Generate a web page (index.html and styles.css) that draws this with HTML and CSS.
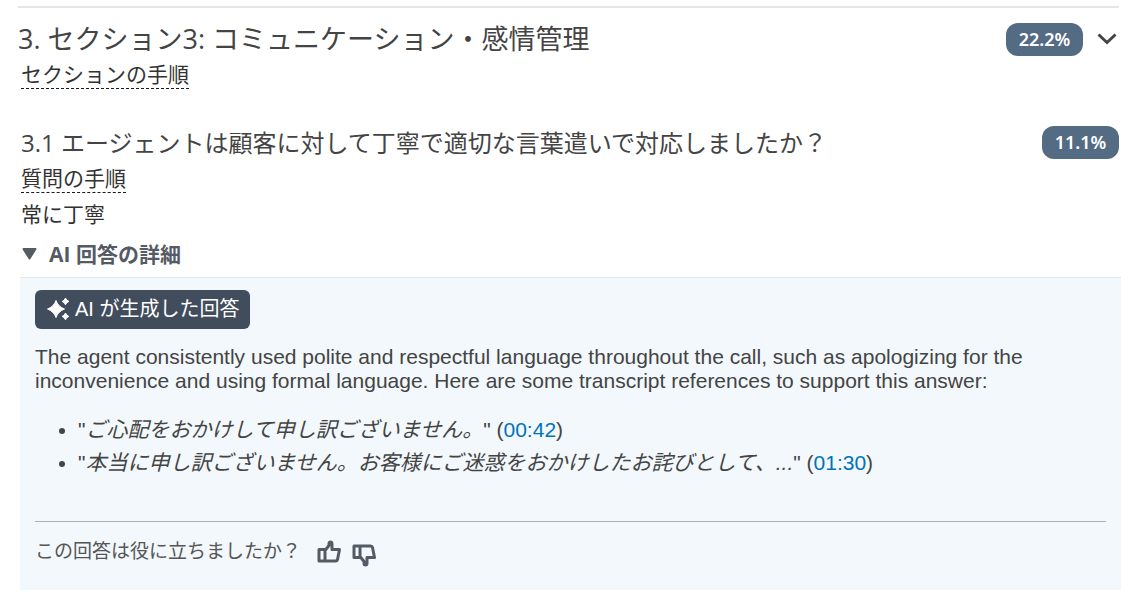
FILE: index.html
```html
<!DOCTYPE html>
<html lang="ja">
<head>
<meta charset="utf-8">
<meta name="viewport" content="width=device-width, initial-scale=1">
<title>セクション3: コミュニケーション・感情管理</title>
<link rel="stylesheet" href="styles.css">
</head>
<body>
<main class="evaluation">
  <section class="section">
    <header class="section-header">
      <h2 class="section-title">3. セクション3: コミュニケーション・感情管理</h2>
      <div class="section-score">
        <span class="badge">22.2%</span>
        <button class="icon-button" type="button" aria-label="セクションを折りたたむ">
          <svg class="chevron" viewBox="0 0 20 12" aria-hidden="true"><path d="M1.500 1.500 10 9.500l8.500-8"/></svg>
        </button>
      </div>
    </header>
    <button class="instructions" type="button">セクションの手順</button>
  </section>

  <section class="question">
    <header class="question-header">
      <h3 class="question-title">3.1 エージェントは顧客に対して丁寧で適切な言葉遣いで対応しましたか？</h3>
      <span class="badge">11.1%</span>
    </header>
    <button class="instructions" type="button">質問の手順</button>
    <p class="answer">常に丁寧</p>
    <button class="details-toggle" type="button" aria-expanded="true">
      <svg class="caret" viewBox="0 0 16 14" aria-hidden="true"><path d="M2.500 2h12L8.500 11.500z"/></svg>
      <span>AI 回答の詳細</span>
    </button>
  </section>

  <section class="ai-panel">
    <button class="ai-button" type="button">
      <svg class="sparkle" viewBox="0 0 24 24" aria-hidden="true">
        <path d="M9 3.500Q11 9.500 17.500 12 11 14.500 9 20.500 7 14.500.5 12 7 9.500 9 3.500z"/>
        <path d="M18.500 1q.9 2.500 3.400 3.400-2.500.9-3.400 3.400-.9-2.500-3.400-3.400 2.500-.9 3.400-3.400z"/>
        <path d="M18.500 16q.9 2.500 3.400 3.400-2.500.9-3.400 3.400-.9-2.500-3.400-3.400 2.500-.9 3.400-3.400z"/>
      </svg>
      <span>AI が生成した回答</span>
    </button>
    <p class="summary" lang="en">The agent consistently used polite and respectful language throughout the call, such as apologizing for the inconvenience and using formal language. Here are some transcript references to support this answer:</p>
    <ul class="references">
      <li>"<em>ご心配をおかけして申し訳ございません。</em>" (<a href="#t0042">00:42</a>)</li>
      <li>"<em>本当に申し訳ございません。お客様にご迷惑をおかけしたお詫びとして、...</em>" (<a href="#t0130">01:30</a>)</li>
    </ul>
    <footer class="feedback">
      <span>この回答は役に立ちましたか？</span>
      <div class="votes">
        <button class="icon-button" type="button" aria-label="役に立った">
          <svg class="thumb" viewBox="0 0 24 24" aria-hidden="true"><path d="M2 9.500h6V21H2zM8 10.500l4-5V4q0-2 1.500-2T15 4v5.500h7.500L20.500 19.500q-.4 1.500-2 1.500H8"/></svg>
        </button>
        <button class="icon-button vote-down" type="button" aria-label="役に立たなかった">
          <svg class="thumb" viewBox="0 0 24 24" aria-hidden="true"><path d="M2 3h6v11.500H2zM8 3h10.500q1.600 0 2 1.500L22.500 14.500H15V20q0 2-1.500 2T12 20v-1.500l-4-5"/></svg>
        </button>
      </div>
    </footer>
  </section>
</main>
</body>
</html>
```
FILE: styles.css
```css
* {
  box-sizing: border-box;
}

body {
  margin: 0;
  background: #fff;
  color: #444;
  font-family: "Liberation Sans", "Noto Sans CJK JP", sans-serif;
  font-size: 21px;
  line-height: 24px;
}

h2,
h3,
p,
ul {
  margin: 0;
  padding: 0;
  font-weight: 400;
}

button {
  padding: 0;
  border: 0;
  background: none;
  color: inherit;
  font: inherit;
  cursor: pointer;
}

svg {
  display: block;
}

.evaluation {
  padding: 6px 21px 24px 20px;
}

.section {
  margin-left: -2px;
  margin-right: 2px;
  padding-top: 14px;
  border-top: 2px solid #e6e6e6;
}

.section-header,
.question-header {
  display: flex;
  align-items: center;
  justify-content: space-between;
  gap: 24px;
}

.section-title {
  font-family: "Open Sans", "Noto Sans CJK JP", sans-serif;
  font-size: 27px;
  line-height: 34px;
}

.section-score {
  display: flex;
  align-items: center;
  gap: 14px;
  padding-right: 2px;
}

.badge {
  min-width: 77px;
  padding: 4px 11px 5px;
  border-radius: 12px;
  background: #546b84;
  color: #fff;
  font-family: "Noto Sans", sans-serif;
  font-size: 18px;
  font-weight: 600;
  line-height: 24px;
  text-align: center;
}

.chevron {
  width: 20px;
  height: 12px;
  fill: none;
  stroke: #444;
  stroke-width: 3;
}

.instructions {
  display: block;
  margin-top: 6px;
  margin-left: 3px;
  border-bottom: 1px dashed #16191f;
  color: #333;
  line-height: 26px;
}

.question {
  margin: 37px 2px 0 1px;
}

.question-title {
  font-family: "Open Sans", "Noto Sans CJK JP", sans-serif;
  font-size: 24px;
  line-height: 32px;
}

.question .instructions {
  margin-top: 7px;
  margin-left: 0;
}

.answer {
  margin-top: 9px;
  color: #333;
  line-height: 26px;
}

.details-toggle {
  display: flex;
  align-items: center;
  gap: 12px;
  margin-top: 13px;
  color: #545b64;
  font-family: "Open Sans", "Noto Sans CJK JP", sans-serif;
  font-weight: 700;
  line-height: 26px;
}

.caret {
  width: 16px;
  height: 14px;
  fill: #545b64;
  stroke: #545b64;
  stroke-width: 2;
  stroke-linejoin: round;
}

.ai-panel {
  margin-top: 10px;
  padding: 12px 15px 22px;
  border-top: 1px solid #dfe8ea;
  background: #f2f8fb;
}

.ai-button {
  display: flex;
  align-items: center;
  gap: 4px;
  padding: 6px 11px 7px 12px;
  border-radius: 6px;
  background: #414d5c;
  color: #fff;
  font-size: 20px;
  line-height: 26px;
}

.sparkle {
  width: 24px;
  height: 24px;
  fill: #fff;
  stroke: #fff;
  stroke-width: 1;
  stroke-linejoin: round;
}

.summary {
  max-width: 1040px;
  margin-top: 16px;
}

.references {
  margin-top: 20px;
  padding-left: 43px;
  line-height: 33px;
}

.references a {
  color: #0073bb;
  text-decoration: none;
}

.feedback {
  display: flex;
  align-items: center;
  gap: 16px;
  margin-top: 42px;
  padding-top: 14px;
  border-top: 1px solid #aab0b5;
  color: #555;
  font-size: 19px;
  line-height: 32px;
}

.votes {
  display: flex;
  gap: 11px;
}

.vote-down {
  margin-top: 6px;
}

.thumb {
  width: 24px;
  height: 24px;
  fill: none;
  stroke: #545b64;
  stroke-width: 3;
  stroke-linejoin: round;
}
```
